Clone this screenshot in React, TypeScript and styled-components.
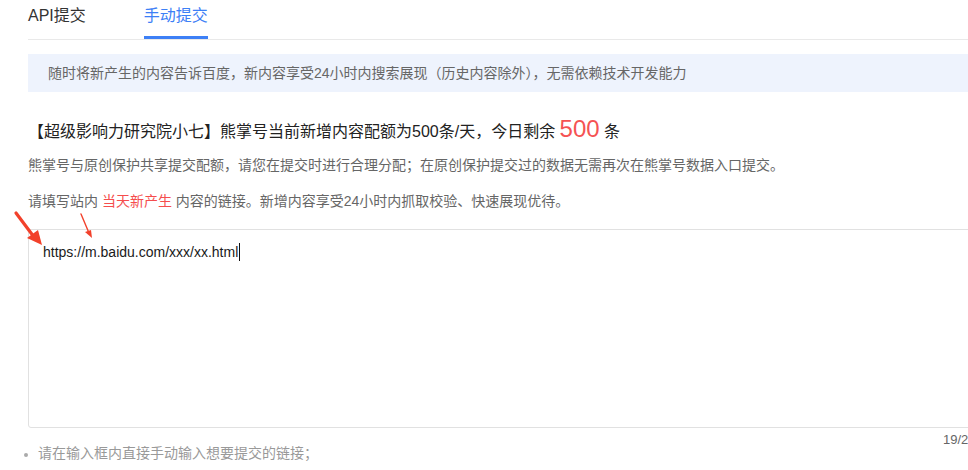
import React from "react";
import styled, { createGlobalStyle } from "styled-components";

const GlobalStyle = createGlobalStyle`
  html, body {
    margin: 0;
    padding: 0;
    background: #fff;
    overflow: hidden;
  }
  body {
    font-family: "Liberation Sans", "Noto Sans CJK SC", sans-serif;
  }
`;

const Page = styled.div`
  position: relative;
  width: 962px;
  padding-left: 28px;
  color: #333;
`;

const TabBar = styled.ul`
  display: flex;
  gap: 58px;
  margin: 0;
  padding: 0;
  list-style: none;
  height: 39px;
  border-bottom: 1px solid #e9e9e9;
`;

const Tab = styled.li<{ $active?: boolean }>`
  height: 36px;
  line-height: 31px;
  font-size: 16px;
  color: ${(p) => (p.$active ? "#3d80f6" : "#333")};
  border-bottom: 3px solid ${(p) => (p.$active ? "#3d80f6" : "transparent")};
`;

const Notice = styled.div`
  margin-top: 14px;
  height: 38px;
  line-height: 38px;
  padding-left: 20px;
  background: #eef3fd;
  font-size: 14px;
  color: #666;
`;

const Quota = styled.h3`
  margin: 22px 0 3px;
  height: 30px;
  line-height: 30px;
  font-size: 16px;
  font-weight: normal;
  color: #222;
`;

const Remain = styled.span`
  font-size: 24px;
  color: #f55353;
`;

const Tip = styled.p`
  margin: 0;
  height: 36px;
  line-height: 36px;
  font-size: 14px;
  color: #666;
`;

const Hot = styled.span`
  color: #f54d4d;
`;

const Editor = styled.div`
  margin-top: 10px;
  height: 199px;
  border: 1px solid #e1e1e1;
  border-radius: 3px;
  padding: 12px 0 0 14px;
  box-sizing: border-box;
  font-size: 14px;
  line-height: 20px;
  color: #1a1a1a;
`;

const Caret = styled.span`
  display: inline-block;
  width: 1px;
  height: 18px;
  margin-left: 1px;
  vertical-align: -4px;
  background: #111;
`;

const Counter = styled.div`
  text-align: right;
  height: 18px;
  line-height: 18px;
  margin-top: 3px;
  font-size: 13px;
  color: #666;
`;

const Hints = styled.ul`
  margin: -6px 0 0;
  padding-left: 10px;
  font-size: 14px;
  line-height: 20px;
  color: #999;
  li::marker {
    color: #aaa;
    font-size: 12px;
  }
`;

const Arrows = styled.svg`
  position: absolute;
  left: 0;
  top: 205px;
  pointer-events: none;
`;

const App: React.FC = () => (
  <>
    <GlobalStyle />
    <Page>
      <TabBar>
        <Tab>{"API提交"}</Tab>
        <Tab $active>{"手动提交"}</Tab>
      </TabBar>
      <Notice>
        {"随时将新产生的内容告诉百度，新内容享受24小时内搜索展现（历史内容除外），无需依赖技术开发能力"}
      </Notice>
      <Quota>
        {"【超级影响力研究院小七】熊掌号当前新增内容配额为500条/天，今日剩余 "}
        <Remain>{"500"}</Remain>
        {" 条"}
      </Quota>
      <Tip>
        {"熊掌号与原创保护共享提交配额，请您在提交时进行合理分配；在原创保护提交过的数据无需再次在熊掌号数据入口提交。"}
      </Tip>
      <Tip>
        {"请填写站内 "}
        <Hot>{"当天新产生"}</Hot>
        {" 内容的链接。新增内容享受24小时内抓取校验、快速展现优待。"}
      </Tip>
      <Editor>
        {"https://m.baidu.com/xxx/xx.html"}
        <Caret />
      </Editor>
      <Counter>{"19/2000"}</Counter>
      <Hints>
        <li>{"请在输入框内直接手动输入想要提交的链接；"}</li>
      </Hints>
      <Arrows width="110" height="50" viewBox="0 0 110 50">
        <line x1="16" y1="8" x2="34" y2="32" stroke="#f2412b" strokeWidth="3.2" strokeLinecap="round" />
        <polygon points="42,40 27,33 38,25" fill="#f2412b" />
        <line x1="81" y1="9" x2="89" y2="28" stroke="#f2412b" strokeWidth="1.4" strokeLinecap="round" />
        <polygon points="92,33 85,27 91,25" fill="#f2412b" />
      </Arrows>
    </Page>
  </>
);

export default App;
